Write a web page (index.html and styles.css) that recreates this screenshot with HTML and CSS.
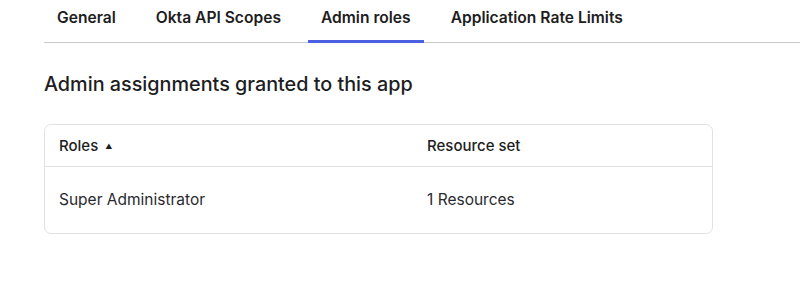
FILE: index.html
```html
<!DOCTYPE html>
<html lang="en">
<head>
    <meta charset="UTF-8">
    <meta name="viewport" content="width=device-width, initial-scale=1.0">
    <title>Admin roles</title>
    <link rel="stylesheet" href="styles.css">
</head>
<body>

    <div class="page">
        <nav class="tabs">
            <a class="tab" href="#">General</a>
            <a class="tab" href="#">Okta API Scopes</a>
            <a class="tab active" href="#">Admin roles</a>
            <a class="tab" href="#">Application Rate Limits</a>
        </nav>

        <section class="content">
            <h2>Admin assignments granted to this app</h2>

            <div class="table-card">
                <table class="roles-table">
                    <thead>
                        <tr>
                            <th class="col-role">Roles <span class="sort-arrow">&#9650;</span></th>
                            <th>Resource set</th>
                        </tr>
                    </thead>
                    <tbody>
                        <tr>
                            <td>Super Administrator</td>
                            <td>1 Resources</td>
                        </tr>
                    </tbody>
                </table>
            </div>
        </section>
    </div>

</body>
</html>
```

FILE: styles.css
```css
/* Global Styles */
* {
    margin: 0;
    padding: 0;
    box-sizing: border-box;
}

body {
    background-color: #fff;
    font-family: Inter, "Noto Sans", sans-serif;
    color: #1d1d21;
    overflow: hidden;
}

.page {
    padding-left: 44px;
}

/* Tabs */
.tabs {
    display: flex;
    border-bottom: 1px solid #c9c9ce;
    height: 43px;
}

.tab {
    display: block;
    padding: 8px 13px 0;
    margin-right: 14px;
    font-size: 15.6px;
    font-weight: 600;
    color: #1d1d21;
    text-decoration: none;
    height: 43px;
    border-bottom: 3px solid transparent;
    margin-bottom: -1px;
}

.tab.active {
    border-bottom-color: #4b5fe1;
}

/* Content */
.content {
    padding-top: 29px;
}

h2 {
    font-size: 19.8px;
    font-weight: 500;
    line-height: 24px;
    margin-bottom: 28px;
}

.table-card {
    width: 669px;
    border: 1px solid #e2e2e5;
    border-radius: 7px;
    overflow: hidden;
}

.roles-table {
    width: 100%;
    border-collapse: collapse;
    font-size: 15.5px;
}

.roles-table th,
.roles-table td {
    text-align: left;
    padding: 0 14px;
}

.roles-table th {
    font-size: 15px;
    font-weight: 500;
    height: 41px;
    border-bottom: 1px solid #e2e2e5;
}

.roles-table td {
    height: 67px;
    color: #2a2a2e;
}

.col-role {
    width: 368px;
}

.sort-arrow {
    font-size: 7px;
    margin-left: 3px;
    vertical-align: 2px;
}
```
